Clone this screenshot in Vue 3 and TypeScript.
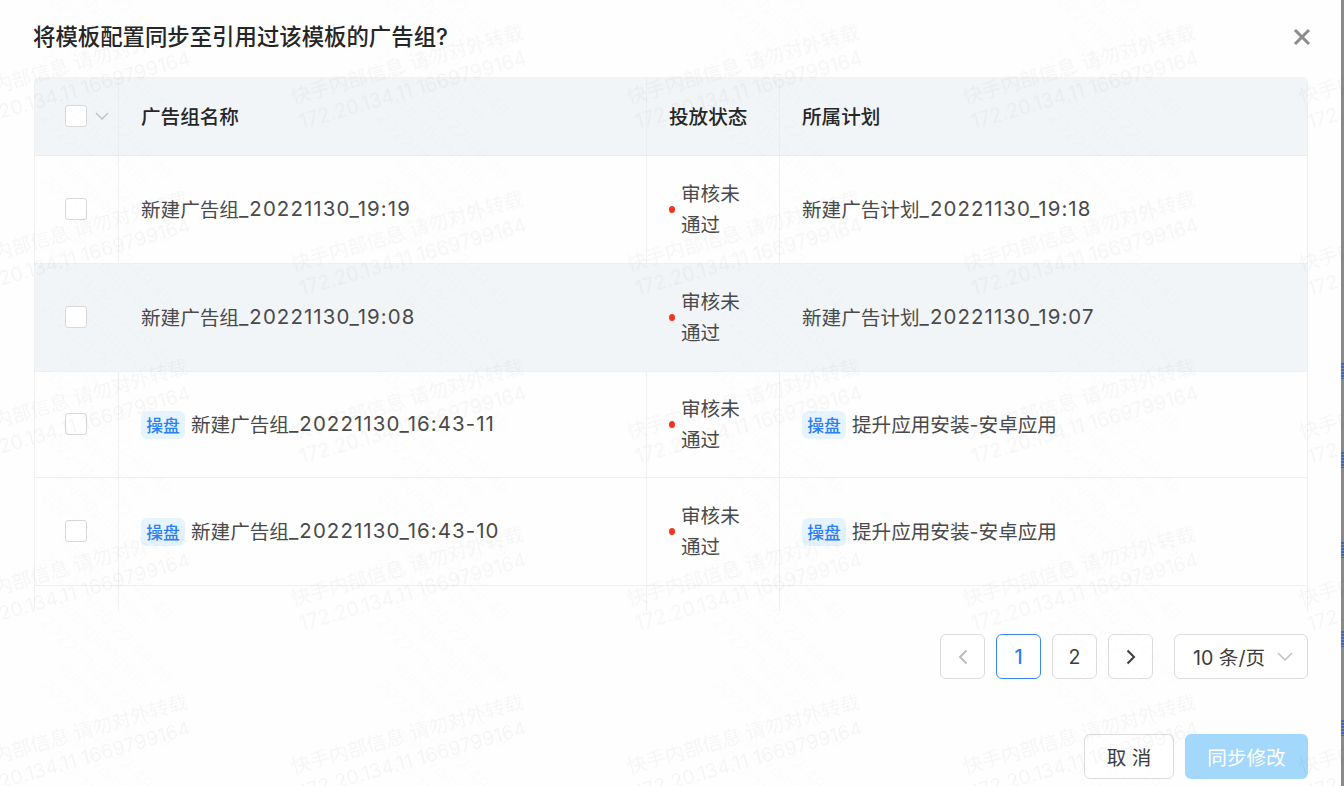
<script setup lang="ts">
interface Row {
  name: string
  nameNum: string
  plan: string
  planNum: string
  tagged: boolean
  hover?: boolean
}

const rows: Row[] = [
  { name: '新建广告组', nameNum: '_20221130_19:19', plan: '新建广告计划', planNum: '_20221130_19:18', tagged: false },
  { name: '新建广告组', nameNum: '_20221130_19:08', plan: '新建广告计划', planNum: '_20221130_19:07', tagged: false, hover: true },
  { name: '新建广告组', nameNum: '_20221130_16:43-11', plan: '提升应用安装-安卓应用', planNum: '', tagged: true },
  { name: '新建广告组', nameNum: '_20221130_16:43-10', plan: '提升应用安装-安卓应用', planNum: '', tagged: true },
]

const marksA: { left: string; top: string }[] = []
for (let c = 0; c < 5; c++) {
  for (let r = 0; r < 5; r++) {
    marksA.push({ left: `${-47.6 + c * 336}px`, top: `${r * 167.5 + 84.5}px` })
  }
}

const marksB: { left: string; top: string }[] = []
for (let c = 0; c < 4; c++) {
  for (let r = -3; r < 13; r++) {
    marksB.push({ left: `${71 + c * 336}px`, top: `${r * 63 + 25}px` })
  }
}

const stripes = [363, 452, 542, 631, 720].map((y) => ({ top: `${y}px` }))
</script>

<template>
  <div class="page">
    <section class="dialog">
      <header class="head">
        <h2 class="title">将模板配置同步至引用过该模板的广告组?</h2>
        <svg class="close" width="18" height="18" viewBox="0 0 18 18">
          <path d="M2 2 L16 16 M16 2 L2 16" stroke="#8c8c8c" stroke-width="3" fill="none" />
        </svg>
      </header>

      <div class="table">
        <div class="cell th check">
          <span class="box"></span>
          <svg class="caret" width="14" height="8" viewBox="0 0 14 8">
            <path d="M1 1 L7 7 L13 1" stroke="#c4c4c4" stroke-width="1.5" fill="none" />
          </svg>
        </div>
        <div class="cell th">广告组名称</div>
        <div class="cell th">投放状态</div>
        <div class="cell th last">所属计划</div>

        <template v-for="row in rows" :key="row.nameNum">
          <div class="cell body check" :class="{ hover: row.hover }"><span class="box"></span></div>
          <div class="cell body" :class="{ hover: row.hover }">
            <span v-if="row.tagged" class="tag">操盘</span>{{ row.name }}<span class="num">{{ row.nameNum }}</span>
          </div>
          <div class="cell status" :class="{ hover: row.hover }">
            <i class="dot"></i><span class="status-text">审核未通过</span>
          </div>
          <div class="cell body last" :class="{ hover: row.hover }">
            <span v-if="row.tagged" class="tag">操盘</span>{{ row.plan }}<span class="num">{{ row.planNum }}</span>
          </div>
        </template>

        <div class="filler"></div>
        <div class="filler"></div>
        <div class="filler"></div>
        <div class="filler last"></div>
      </div>

      <nav class="pager">
        <button class="pg disabled">
          <svg width="12" height="16" viewBox="0 0 12 16"><path d="M9.5 1.5 L3 8 L9.5 14.5" stroke="#bdbdbd" stroke-width="2" fill="none" /></svg>
        </button>
        <button class="pg active">1</button>
        <button class="pg">2</button>
        <button class="pg">
          <svg width="12" height="16" viewBox="0 0 12 16"><path d="M2.5 1.5 L9 8 L2.5 14.5" stroke="#3d3d3d" stroke-width="2" fill="none" /></svg>
        </button>
        <div class="size">
          <span>10 条/页</span>
          <svg width="16" height="9" viewBox="0 0 16 9"><path d="M1 1 L8 8 L15 1" stroke="#c4c4c4" stroke-width="1.6" fill="none" /></svg>
        </div>
      </nav>

      <footer class="foot">
        <button class="btn cancel">取 消</button>
        <button class="btn primary">同步修改</button>
      </footer>
    </section>
    <div class="edge">
      <i v-for="(s, i) in stripes" :key="i" class="stripe" :style="s"></i>
    </div>

    <div class="marks" aria-hidden="true">
      <div v-for="(m, i) in marksB" :key="'b' + i" class="mark-b" :style="m">
        <div>wangyongwei -</div>
        <div>2022/11/30 22:49:49</div>
      </div>
      <div v-for="(m, i) in marksA" :key="'a' + i" class="mark-a" :style="m">
        <div>快手内部信息 请勿对外转载</div>
        <div class="ma-2">172.20.134.11 1669799164</div>
      </div>
    </div>
  </div>
</template>

<style>
html, body { margin: 0; padding: 0; background: #fff; overflow: hidden; }
</style>

<style scoped>
.page {
  position: relative;
  display: flex;
  width: 1344px;
  height: 786px;
  overflow: hidden;
  font-family: Inter, "Noto Sans CJK SC", sans-serif;
  font-size: 19.6px;
  color: #4a4a4a;
}
.dialog {
  width: 1341px;
  background: #fefefe;
  display: flex;
  flex-direction: column;
  padding: 0 33px 0 34px;
  box-sizing: border-box;
}
.head {
  display: flex;
  align-items: center;
  justify-content: space-between;
  height: 78px;
  padding-bottom: 9px;
  box-sizing: border-box;
}
.title {
  margin: 0 0 0 -1px;
  font-size: 22.4px;
  font-weight: 500;
  color: #262626;
}
.close { margin-right: -3px; margin-top: 4px; }
.table {
  display: grid;
  grid-template-columns: 84px 528px 133px 1fr;
  grid-template-rows: 78px 108px 108px 106px 108px 25px;
  border-left: 1px solid #f0f0f0;
  border-right: 1px solid #f0f0f0;
  border-top: 1px solid #f2f2f2;
  border-radius: 6px 6px 0 0;
  overflow: hidden;
  width: 1274px;
  box-sizing: border-box;
  margin-top: -1px;
}
.cell {
  display: flex;
  align-items: center;
  padding-left: 22px;
  border-right: 1px solid #f0f0f0;
  border-bottom: 1px solid #f0f0f0;
  white-space: nowrap;
  min-width: 0;
  box-sizing: border-box;
}
.body { padding-bottom: 2px; }
.last { border-right: 0; }
.th {
  background: #f2f5f8;
  color: #262626;
  font-weight: 500;
  font-size: 19.6px;
  padding-bottom: 2px;
  border-right-color: #ebeef1;
  border-bottom-color: #e9ecef;
}
.hover { background: #f2f5f8; border-right-color: #f2f5f8; }
.check { padding-left: 30px; gap: 8px; }
.box {
  width: 22px;
  height: 22px;
  box-sizing: border-box;
  background: #fff;
  border: 1px solid #d9d9d9;
  border-radius: 3px;
  flex: none;
}
.caret { flex: none; }
.filler { border-right: 1px solid #f0f0f0; }
.filler.last { border-right: 0; }
.status { gap: 6px; padding-top: 1px; }
.dot {
  width: 6px;
  height: 7px;
  margin-top: -2px;
  border-radius: 50%;
  background: #f5331e;
  flex: none;
}
.status-text {
  width: 60px;
  white-space: normal;
  line-height: 31px;
}
.num {
  font-size: 20.4px;
  letter-spacing: 1.1px;
}
.tag {
  display: inline-flex;
  align-items: center;
  justify-content: center;
  width: 44px;
  height: 28px;
  margin-top: 2px;
  margin-right: 6px;
  border-radius: 6px;
  background: #e6f4ff;
  color: #2b7ff6;
  font-size: 16.8px;
  font-weight: 500;
}
.pager {
  display: flex;
  justify-content: flex-end;
  align-items: center;
  gap: 11px;
  margin-top: 23px;
  height: 45px;
  width: 1274px;
}
.pg {
  width: 45px;
  height: 45px;
  padding: 0;
  display: flex;
  align-items: center;
  justify-content: center;
  background: #fff;
  border: 1px solid #dcdcdc;
  border-radius: 6px;
  font: inherit;
  color: #3d3d3d;
}
.pg.active { border-color: #3b86f7; color: #2b7ff6; font-weight: 500; }
.size {
  display: flex;
  align-items: center;
  justify-content: space-between;
  box-sizing: border-box;
  width: 134px;
  height: 45px;
  margin-left: 10px;
  padding: 0 14px 0 18px;
  background: #fff;
  border: 1px solid #dcdcdc;
  border-radius: 6px;
  color: #3d3d3d;
}
.foot {
  display: flex;
  justify-content: flex-end;
  gap: 11px;
  margin-top: 55px;
  width: 1274px;
}
.btn {
  height: 45px;
  padding: 0;
  border-radius: 6px;
  font: inherit;
}
.cancel {
  width: 90px;
  background: #fff;
  border: 1px solid #dcdcdc;
  color: #3d3d3d;
}
.primary {
  width: 123px;
  background: #a3d7fb;
  border: 0;
  color: #fff;
}
.edge {
  position: relative;
  flex: 1;
  background: #8a8a8a;
}
.stripe {
  position: absolute;
  left: 0;
  right: 0;
  height: 16px;
  background: repeating-linear-gradient(#4169b0 0 2px, #8a8a8a 2px 3px);
}
.marks {
  position: absolute;
  inset: 0;
  pointer-events: none;
  overflow: hidden;
  filter: blur(0.3px);
}
.mark-a {
  position: absolute;
  transform-origin: left top;
  transform: rotate(-16deg);
  color: rgba(0, 0, 0, 0.035);
  font-size: 19.6px;
  line-height: 26px;
  white-space: nowrap;
}
.ma-2 { padding-left: 1px; font-size: 19.6px; letter-spacing: 0.05px; }
.mark-b {
  position: absolute;
  transform-origin: left top;
  transform: rotate(45deg);
  color: rgba(0, 0, 0, 0.012);
  font-size: 18px;
  line-height: 25px;
  white-space: nowrap;
}
</style>
